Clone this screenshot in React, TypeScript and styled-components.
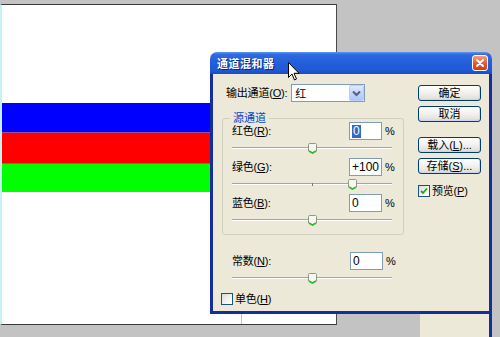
import React from "react";
import styled, { createGlobalStyle } from "styled-components";

const Global = createGlobalStyle`
  html, body { margin: 0; padding: 0; background: #c3c3c3; }
  body { font-family: "Liberation Sans", "Noto Sans CJK SC", sans-serif; }
  u { text-decoration: underline; text-underline-offset: 1px; }
`;

const Desktop = styled.div`
  position: relative;
  width: 500px;
  height: 337px;
  overflow: hidden;
  background: #c3c3c3;
`;

const Canvas = styled.div`
  position: absolute;
  left: 0;
  top: 4px;
  width: 337px;
  height: 321px;
  box-sizing: border-box;
  background: #fff;
  border-top: 1px solid #3a3a3a;
  border-bottom: 1px solid #3a3a3a;
  border-right: 1px solid #4a4a4a;
  border-left: 2px solid #c6f2f6;
  padding-top: 98px;
  display: flex;
  flex-direction: column;
`;

const Stripe = styled.div<{ $color: string; $h: number; $edge?: string }>`
  height: ${(p) => p.$h}px;
  background: ${(p) => p.$color};
  border-top: ${(p) => (p.$edge ? `1px solid ${p.$edge}` : "none")};
`;

const Guide = styled.div`
  position: absolute;
  left: 239px;
  top: 300px;
  bottom: 0;
  width: 1px;
  background: #7fdede;
`;

const Dialog = styled.div`
  position: absolute;
  left: 210px;
  top: 52px;
  width: 282px;
  height: 262px;
  display: flex;
  flex-direction: column;
  font-size: 11px;
  color: #000;
`;

const TitleBar = styled.div`
  height: 22px;
  flex: none;
  display: flex;
  align-items: center;
  justify-content: space-between;
  padding: 0 4px 0 7px;
  border-radius: 7px 7px 0 0;
  background: linear-gradient(180deg, #5b95f3 0%, #2f69e0 12%, #2360dc 45%, #1f58d3 85%, #1a4bc0 100%);
`;

const Title = styled.span`
  color: #fff;
  font-weight: bold;
  font-size: 11px;
  letter-spacing: 0.5px;
  text-shadow: 1px 1px 0 #0a2470;
`;

const CloseBtn = styled.div`
  width: 16px;
  height: 16px;
  box-sizing: border-box;
  border: 1px solid #fff;
  border-radius: 3px;
  background: linear-gradient(180deg, #f4a07c 0%, #e1582c 55%, #c8401c 100%);
  display: flex;
  align-items: center;
  justify-content: center;
`;

const Body = styled.div`
  flex: 1;
  background: #ece9d8;
  border: 3px solid #142f9c;
  border-top: none;
  display: flex;
  padding: 10px 8px 0 8px;
  gap: 14px;
`;

const LeftCol = styled.div`
  width: 183px;
  display: flex;
  flex-direction: column;
`;

const RightCol = styled.div`
  width: 63px;
  display: flex;
  flex-direction: column;
`;

const OutRow = styled.div`
  height: 18px;
  display: flex;
  align-items: center;
  padding-left: 5px;
  gap: 4px;
`;

const Label = styled.span`
  white-space: nowrap;
  letter-spacing: -0.2px;
  line-height: 14px;
`;

const Select = styled.div`
  width: 78px;
  height: 18px;
  box-sizing: border-box;
  border: 1px solid #7f9db9;
  background: #fff;
  display: flex;
  align-items: center;
  justify-content: space-between;
  padding-left: 3px;
  margin-left: auto;
  margin-right: 39px;
`;

const DropBtn = styled.div`
  width: 15px;
  height: 16px;
  box-sizing: border-box;
  border: 1px solid #b9cdf6;
  border-radius: 2px;
  background: linear-gradient(180deg, #dfe9fd 0%, #c3d5fb 50%, #aec6f7 100%);
  display: flex;
  align-items: center;
  justify-content: center;
`;

const Group = styled.div`
  position: relative;
  margin: 16px 0 0 1px;
  width: 182px;
  box-sizing: border-box;
  border: 1px solid #d0d0bf;
  border-radius: 3px;
  padding: 3px 0 4px 0;
  display: flex;
  flex-direction: column;
`;

const Legend = styled.span`
  position: absolute;
  left: 7px;
  top: -8px;
  padding: 0 3px;
  background: #ece9d8;
  color: #0046d5;
  line-height: 14px;
`;

const Channel = styled.div<{ $pl: number }>`
  display: flex;
  flex-direction: column;
  height: 36px;
  padding-left: ${(p) => p.$pl}px;
`;

const ValueRow = styled.div`
  height: 18px;
  display: flex;
  align-items: center;
`;

const Input = styled.div`
  margin-left: auto;
  width: 33px;
  height: 18px;
  box-sizing: border-box;
  border: 1px solid #7f9db9;
  background: #fff;
  display: flex;
  align-items: center;
  padding-left: 2px;
  font-size: 12px;
`;

const Sel = styled.span`
  background: #316ac5;
  color: #fff;
  padding: 0 1px;
  line-height: 13px;
`;

const Pct = styled.span`
  width: 12px;
  margin-left: 3px;
  margin-right: 6px;
`;

const Track = styled.div`
  position: relative;
  width: 160px;
  height: 16px;
`;

const Groove = styled.div`
  position: absolute;
  left: 0;
  right: 0;
  top: 7px;
  height: 2px;
  border-top: 1px solid #a7a69a;
  background: #fff;
  box-sizing: border-box;
`;

const Tick = styled.div`
  position: absolute;
  left: 80px;
  top: 7px;
  width: 1px;
  height: 3px;
  background: #7a7a70;
`;

const Thumb = styled.svg`
  position: absolute;
  top: 3px;
`;

const ConstBlock = styled.div`
  margin-top: 17px;
`;

const Check = styled.div<{ $on?: boolean }>`
  width: 12px;
  height: 12px;
  box-sizing: border-box;
  border: 1px solid #1c5180;
  background: linear-gradient(135deg, #dcdcd4 0%, #fff 90%);
  display: flex;
  align-items: center;
  justify-content: center;
  flex: none;
`;

const CheckRow = styled.div<{ $mt: number }>`
  display: flex;
  align-items: center;
  gap: 2px;
  margin-top: ${(p) => p.$mt}px;
  height: 13px;
`;

const Button = styled.div<{ $mt: number }>`
  margin-top: ${(p) => p.$mt}px;
  height: 16px;
  box-sizing: border-box;
  border: 1px solid #003c74;
  border-radius: 3px;
  background: linear-gradient(180deg, #ffffff 0%, #f3f2ee 45%, #e6e3da 85%, #d2cdc0 100%);
  box-shadow: inset -1px -1px 0 #c7d7f2;
  display: flex;
  align-items: center;
  justify-content: center;
  line-height: 13px;
`;

const Tail = styled.div`
  position: absolute;
  left: 420px;
  top: 314px;
  width: 69px;
  height: 23px;
  background: #ece9d8;
  border-right: 3px solid #142f9c;
`;

const Cursor = styled.svg`
  position: absolute;
  left: 288px;
  top: 62px;
`;

function SliderThumb({ value }: { value: number }) {
  const left = 80 + (value / 200) * 80 - 4;
  return (
    <Thumb width="9" height="11" viewBox="0 0 9 11" style={{ left }}>
      <path d="M1.5 0.5 H7.5 Q8.5 0.5 8.5 1.5 V8 L4.5 10.5 L0.5 8 V1.5 Q0.5 0.5 1.5 0.5 Z" fill="#f7f6ef" stroke="#8b9a86" />
      <path d="M1 8 L4.5 10 L8 8" fill="none" stroke="#21c121" strokeWidth="1.5" />
    </Thumb>
  );
}

function Slider({ value }: { value: number }) {
  return (
    <Track>
      <Groove />
      <Tick />
      <SliderThumb value={value} />
    </Track>
  );
}

function ChannelRow({ label, key2, value, selected, pl }: { label: string; key2: string; value: string; selected?: boolean; pl: number }) {
  const num = parseInt(value, 10) || 0;
  return (
    <Channel $pl={pl}>
      <ValueRow>
        <Label>
          {label}(<u>{key2}</u>):
        </Label>
        <Input>{selected ? <Sel>{value}</Sel> : value}</Input>
        <Pct>%</Pct>
      </ValueRow>
      <Slider value={num} />
    </Channel>
  );
}

export default function App() {
  return (
    <>
      <Global />
      <Desktop>
        <Canvas>
          <Guide />
          <Stripe $color="#0000ff" $h={29} />
          <Stripe $color="#ff0000" $h={30} $edge="#9a4e92" />
          <Stripe $color="#00ff00" $h={28} $edge="#8c7a1a" />
        </Canvas>

        <Dialog>
          <TitleBar>
            <Title>通道混和器</Title>
            <CloseBtn>
              <svg width="10" height="10" viewBox="0 0 10 10">
                <path d="M2 2 L8 8 M8 2 L2 8" stroke="#fff" strokeWidth="2" strokeLinecap="round" />
              </svg>
            </CloseBtn>
          </TitleBar>
          <Body>
            <LeftCol>
              <OutRow>
                <Label>
                  输出通道(<u>O</u>):
                </Label>
                <Select>
                  <span>红</span>
                  <DropBtn>
                    <svg width="9" height="7" viewBox="0 0 9 7">
                      <path d="M1 1.5 L4.5 5 L8 1.5" fill="none" stroke="#4d6185" strokeWidth="2" />
                    </svg>
                  </DropBtn>
                </Select>
              </OutRow>
              <Group>
                <Legend>源通道</Legend>
                <ChannelRow label="红色" key2="R" value="0" selected pl={9} />
                <ChannelRow label="绿色" key2="G" value="+100" pl={9} />
                <ChannelRow label="蓝色" key2="B" value="0" pl={9} />
              </Group>
              <ConstBlock>
                <ChannelRow label="常数" key2="N" value="0" pl={11} />
              </ConstBlock>
              <CheckRow $mt={4}>
                <Check />
                <Label>
                  单色(<u>H</u>)
                </Label>
              </CheckRow>
            </LeftCol>
            <RightCol>
              <Button $mt={1}>确定</Button>
              <Button $mt={5}>取消</Button>
              <Button $mt={15}>
                载入(<u>L</u>)...
              </Button>
              <Button $mt={5}>
                存储(<u>S</u>)...
              </Button>
              <CheckRow $mt={10}>
                <Check $on>
                  <svg width="8" height="8" viewBox="0 0 8 8">
                    <path d="M1 4 L3 6 L7 1.5" fill="none" stroke="#21a121" strokeWidth="1.8" />
                  </svg>
                </Check>
                <Label>
                  预览(<u>P</u>)
                </Label>
              </CheckRow>
            </RightCol>
          </Body>
        </Dialog>
        <Tail />

        <Cursor width="12" height="19" viewBox="0 0 12 19">
          <path d="M0.5 0.5 V15.5 L4 12 L6.5 18 L8.5 17 L6 11.3 H11 Z" fill="#fff" stroke="#000" strokeWidth="1" />
        </Cursor>
      </Desktop>
    </>
  );
}
